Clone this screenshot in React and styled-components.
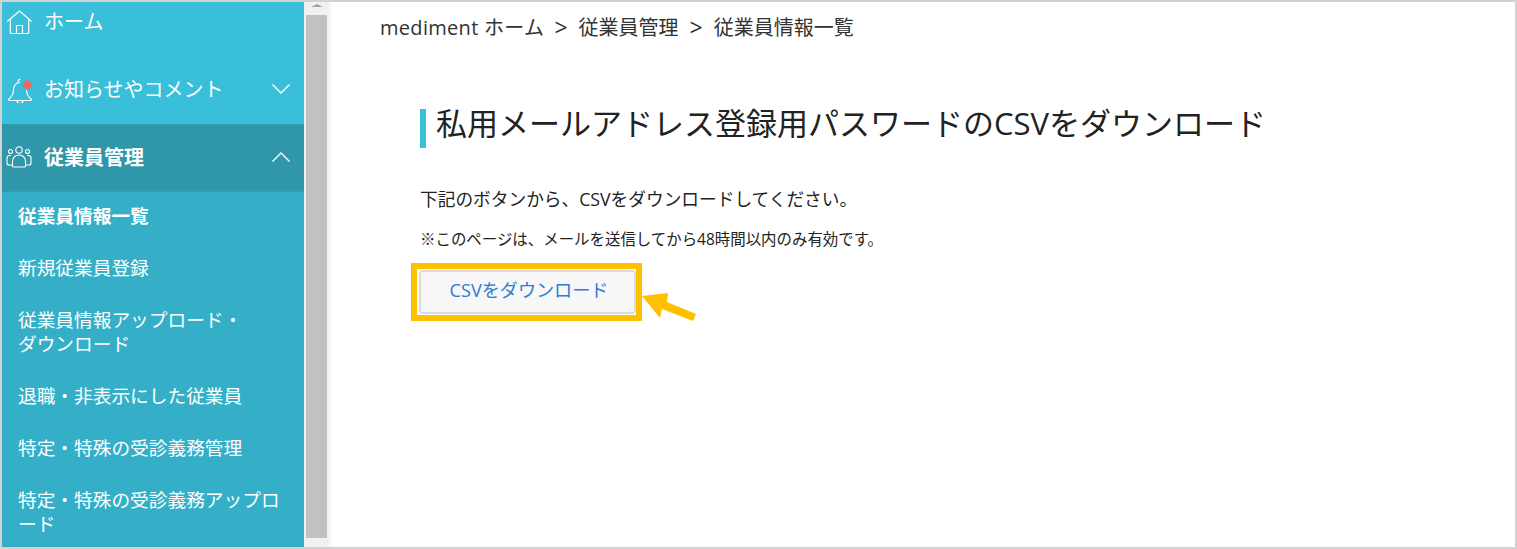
import styled, { createGlobalStyle } from 'styled-components';

const GlobalStyle = createGlobalStyle`
    html, body {
        margin: 0;
        padding: 0;
        background: #fff;
    }
    body {
        font-family: "Open Sans", "Noto Sans CJK JP", sans-serif;
    }
`
const Frame = styled.div`
    box-sizing: border-box;
    width: 1517px;
    height: 549px;
    border: 2px solid #d2d2d2;
    display: flex;
    overflow: hidden;
`
const Sidebar = styled.nav`
    width: 302px;
    flex-shrink: 0;
    background-color: #35afc8;
    overflow: hidden;
`
const MenuItem = styled.div`
    box-sizing: border-box;
    height: ${props => props.$height || 68}px;
    padding: 0 13px 2px 4px;
    display: flex;
    align-items: center;
    gap: 12px;
    color: #fff;
    font-size: 20px;
    font-weight: ${props => props.$active ? 700 : 400};
    background-color: ${props => props.$active ? '#2f97a9' : '#39bfda'};
    border-top: ${props => props.$active ? '1px solid #2f9fb4' : '0'};
    border-bottom: ${props => props.$active ? '1px solid #2f9fb4' : '0'};
    svg {
        flex-shrink: 0;
    }
`
const HomeItem = styled(MenuItem)`
    align-items: flex-start;
    padding-top: 4px;
    line-height: 30px;
`
const MenuLabel = styled.span`
    flex: 1;
    line-height: 30px;
    font-family: "Noto Sans CJK JP", sans-serif;
`
const SubList = styled.div`
    display: flex;
    flex-direction: column;
`
const SubItem = styled.a`
    display: block;
    padding: 11px 16px 17px 16px;
    color: #fff;
    font-family: "Noto Sans CJK JP", sans-serif;
    font-size: 18.7px;
    line-height: 24px;
    font-weight: ${props => props.$current ? 700 : 400};
`
const Scrollbar = styled.div`
    width: 27px;
    flex-shrink: 0;
    box-sizing: border-box;
    background-color: #f1f1f1;
    padding: 2px 1px 9px 2px;
    display: flex;
    flex-direction: column;
    border-right: 3px solid #f6f6f6;
`
const ScrollArrow = styled.div`
    width: 0;
    height: 0;
    margin: 0 auto 8px;
    border-left: 6px solid transparent;
    border-right: 6px solid transparent;
    border-bottom: 3px solid #a3a3a3;
`
const ScrollThumb = styled.div`
    flex: 1;
    background-color: #c1c1c1;
`
const Main = styled.main`
    flex: 1;
    padding: 9px 0 0 49px;
    color: #222;
`
const Breadcrumb = styled.div`
    display: flex;
    gap: 11px;
    font-size: 20px;
    line-height: 34px;
    height: 34px;
    color: #333;
`
const CrumbHome = styled.span`
    letter-spacing: 0.3px;
    margin-right: -1px;
`
const CrumbSeparator = styled.span`
    font-size: 23px;
    line-height: 32px;
`
const Title = styled.h1`
    margin: 64px 0 0 40px;
    padding: 0 0 10px 10px;
    border-left: 6px solid #39bfda;
    font-size: 31px;
    font-weight: 400;
    line-height: 29px;
    color: #222;
`
const Lead = styled.p`
    margin: 38px 0 0 40px;
    font-size: 17.7px;
    line-height: 26px;
`
const Note = styled.p`
    margin: 15px 0 0 40px;
    font-size: 15.45px;
    line-height: 24px;
`
const ButtonRow = styled.div`
    margin: 12px 0 0 31px;
    display: flex;
    align-items: flex-start;
`
const Highlight = styled.div`
    box-sizing: border-box;
    width: 231px;
    height: 58px;
    border: 6px solid #ffc000;
    padding: 1px 0 0 2px;
    background: #fff;
`
const DownloadButton = styled.button`
    box-sizing: border-box;
    width: 217px;
    height: 44px;
    border: 2px solid #dcdcdc;
    border-radius: 4px;
    background-color: #f7f7f7;
    color: #2f7bd6;
    font-family: inherit;
    font-size: 18.1px;
    line-height: 33px;
    padding: 0 0 3px 3px;
`
const Arrow = styled.svg`
    margin-top: 26px;
`

const HomeIcon = () => (
  <svg width="26" height="30" viewBox="0 -3 26 30" fill="none" stroke="#fff" strokeWidth="1.2" strokeLinejoin="round">
    <path d="M1.300 12.500 13.500 2 25.700 12.500" />
    <path d="M4.300 10.500v13a1 1 0 0 0 1 1h16.400a1 1 0 0 0 1-1v-13" />
    <path d="M10.500 24.500V16.500h6v8" />
  </svg>
)

const BellIcon = () => (
  <svg width="26" height="28" viewBox="0 0 26 28" fill="none" stroke="#fff" strokeWidth="1.100" strokeLinejoin="round">
    <path d="M14 7.500c-4 0-6.500 3-6.500 7.500 0 4.500-2 7-5 9.500 0 .7.300 1 1 1h21c.7 0 1-.3 1-1-3-2.500-5-5-5-9.500" />
    <path d="M12 7.500a2 2.500 0 0 1 2.500-3" />
    <path d="M11 25.500a3 3 0 0 0 6 0" />
    <circle cx="21.300" cy="9.800" r="4.300" fill="#f0665f" stroke="none" />
  </svg>
)

const PeopleIcon = () => (
  <svg width="26" height="24" viewBox="0 0 26 24" fill="none" stroke="#fff" strokeWidth="1.100">
    <circle cx="13" cy="5" r="3.200" />
    <circle cx="4.500" cy="6.500" r="2" />
    <circle cx="21.500" cy="6.500" r="2" />
    <path d="M6.500 21v-5a6.500 6 0 0 1 13 0v5a1 1 0 0 1-1 1h-11a1 1 0 0 1-1-1Z" />
    <path d="M5 10.500H3.500A2.500 2.500 0 0 0 1 13v5a2 2 0 0 0 2 2h3" />
    <path d="M21 10.500h1.500A2.500 2.500 0 0 1 25 13v5a2 2 0 0 1-2 2h-3" />
  </svg>
)

const Chevron = ({ up }) => (
  <svg width="20" height="12" viewBox="0 0 20 12" fill="none" stroke="#fff" strokeWidth="1.400">
    <path d={up ? 'M1.500 10.500 10 2l8.500 8.500' : 'M1.500 1.500 10 10l8.500-8.500'} />
  </svg>
)

const App = () => {
  return (
    <>
      <GlobalStyle />
      <Frame>
        <Sidebar>
          <HomeItem $height={53}>
            <HomeIcon />
            <MenuLabel>ホーム</MenuLabel>
          </HomeItem>
          <MenuItem $height={69}>
            <BellIcon />
            <MenuLabel>お知らせやコメント</MenuLabel>
            <Chevron />
          </MenuItem>
          <MenuItem $active>
            <PeopleIcon />
            <MenuLabel>従業員管理</MenuLabel>
            <Chevron up />
          </MenuItem>
          <SubList>
            <SubItem $current>従業員情報一覧</SubItem>
            <SubItem>新規従業員登録</SubItem>
            <SubItem>従業員情報アップロード・<br />ダウンロード</SubItem>
            <SubItem>退職・非表示にした従業員</SubItem>
            <SubItem>特定・特殊の受診義務管理</SubItem>
            <SubItem>特定・特殊の受診義務アップロード</SubItem>
          </SubList>
        </Sidebar>
        <Scrollbar>
          <ScrollArrow />
          <ScrollThumb />
        </Scrollbar>
        <Main>
          <Breadcrumb>
            <CrumbHome>mediment ホーム</CrumbHome>
            <CrumbSeparator>&gt;</CrumbSeparator>
            <span>従業員管理</span>
            <CrumbSeparator>&gt;</CrumbSeparator>
            <span>従業員情報一覧</span>
          </Breadcrumb>
          <Title>私用メールアドレス登録用パスワードのCSVをダウンロード</Title>
          <Lead>下記のボタンから、CSVをダウンロードしてください。</Lead>
          <Note>※このページは、メールを送信してから48時間以内のみ有効です。</Note>
          <ButtonRow>
            <Highlight>
              <DownloadButton>CSVをダウンロード</DownloadButton>
            </Highlight>
            <Arrow width="56" height="34" viewBox="0 0 56 34">
              <polygon points="0,7 26,4 25,13 54,25 51,32 20,20 18,29" fill="#ffc000" />
            </Arrow>
          </ButtonRow>
        </Main>
      </Frame>
    </>
  )
}

export default App
